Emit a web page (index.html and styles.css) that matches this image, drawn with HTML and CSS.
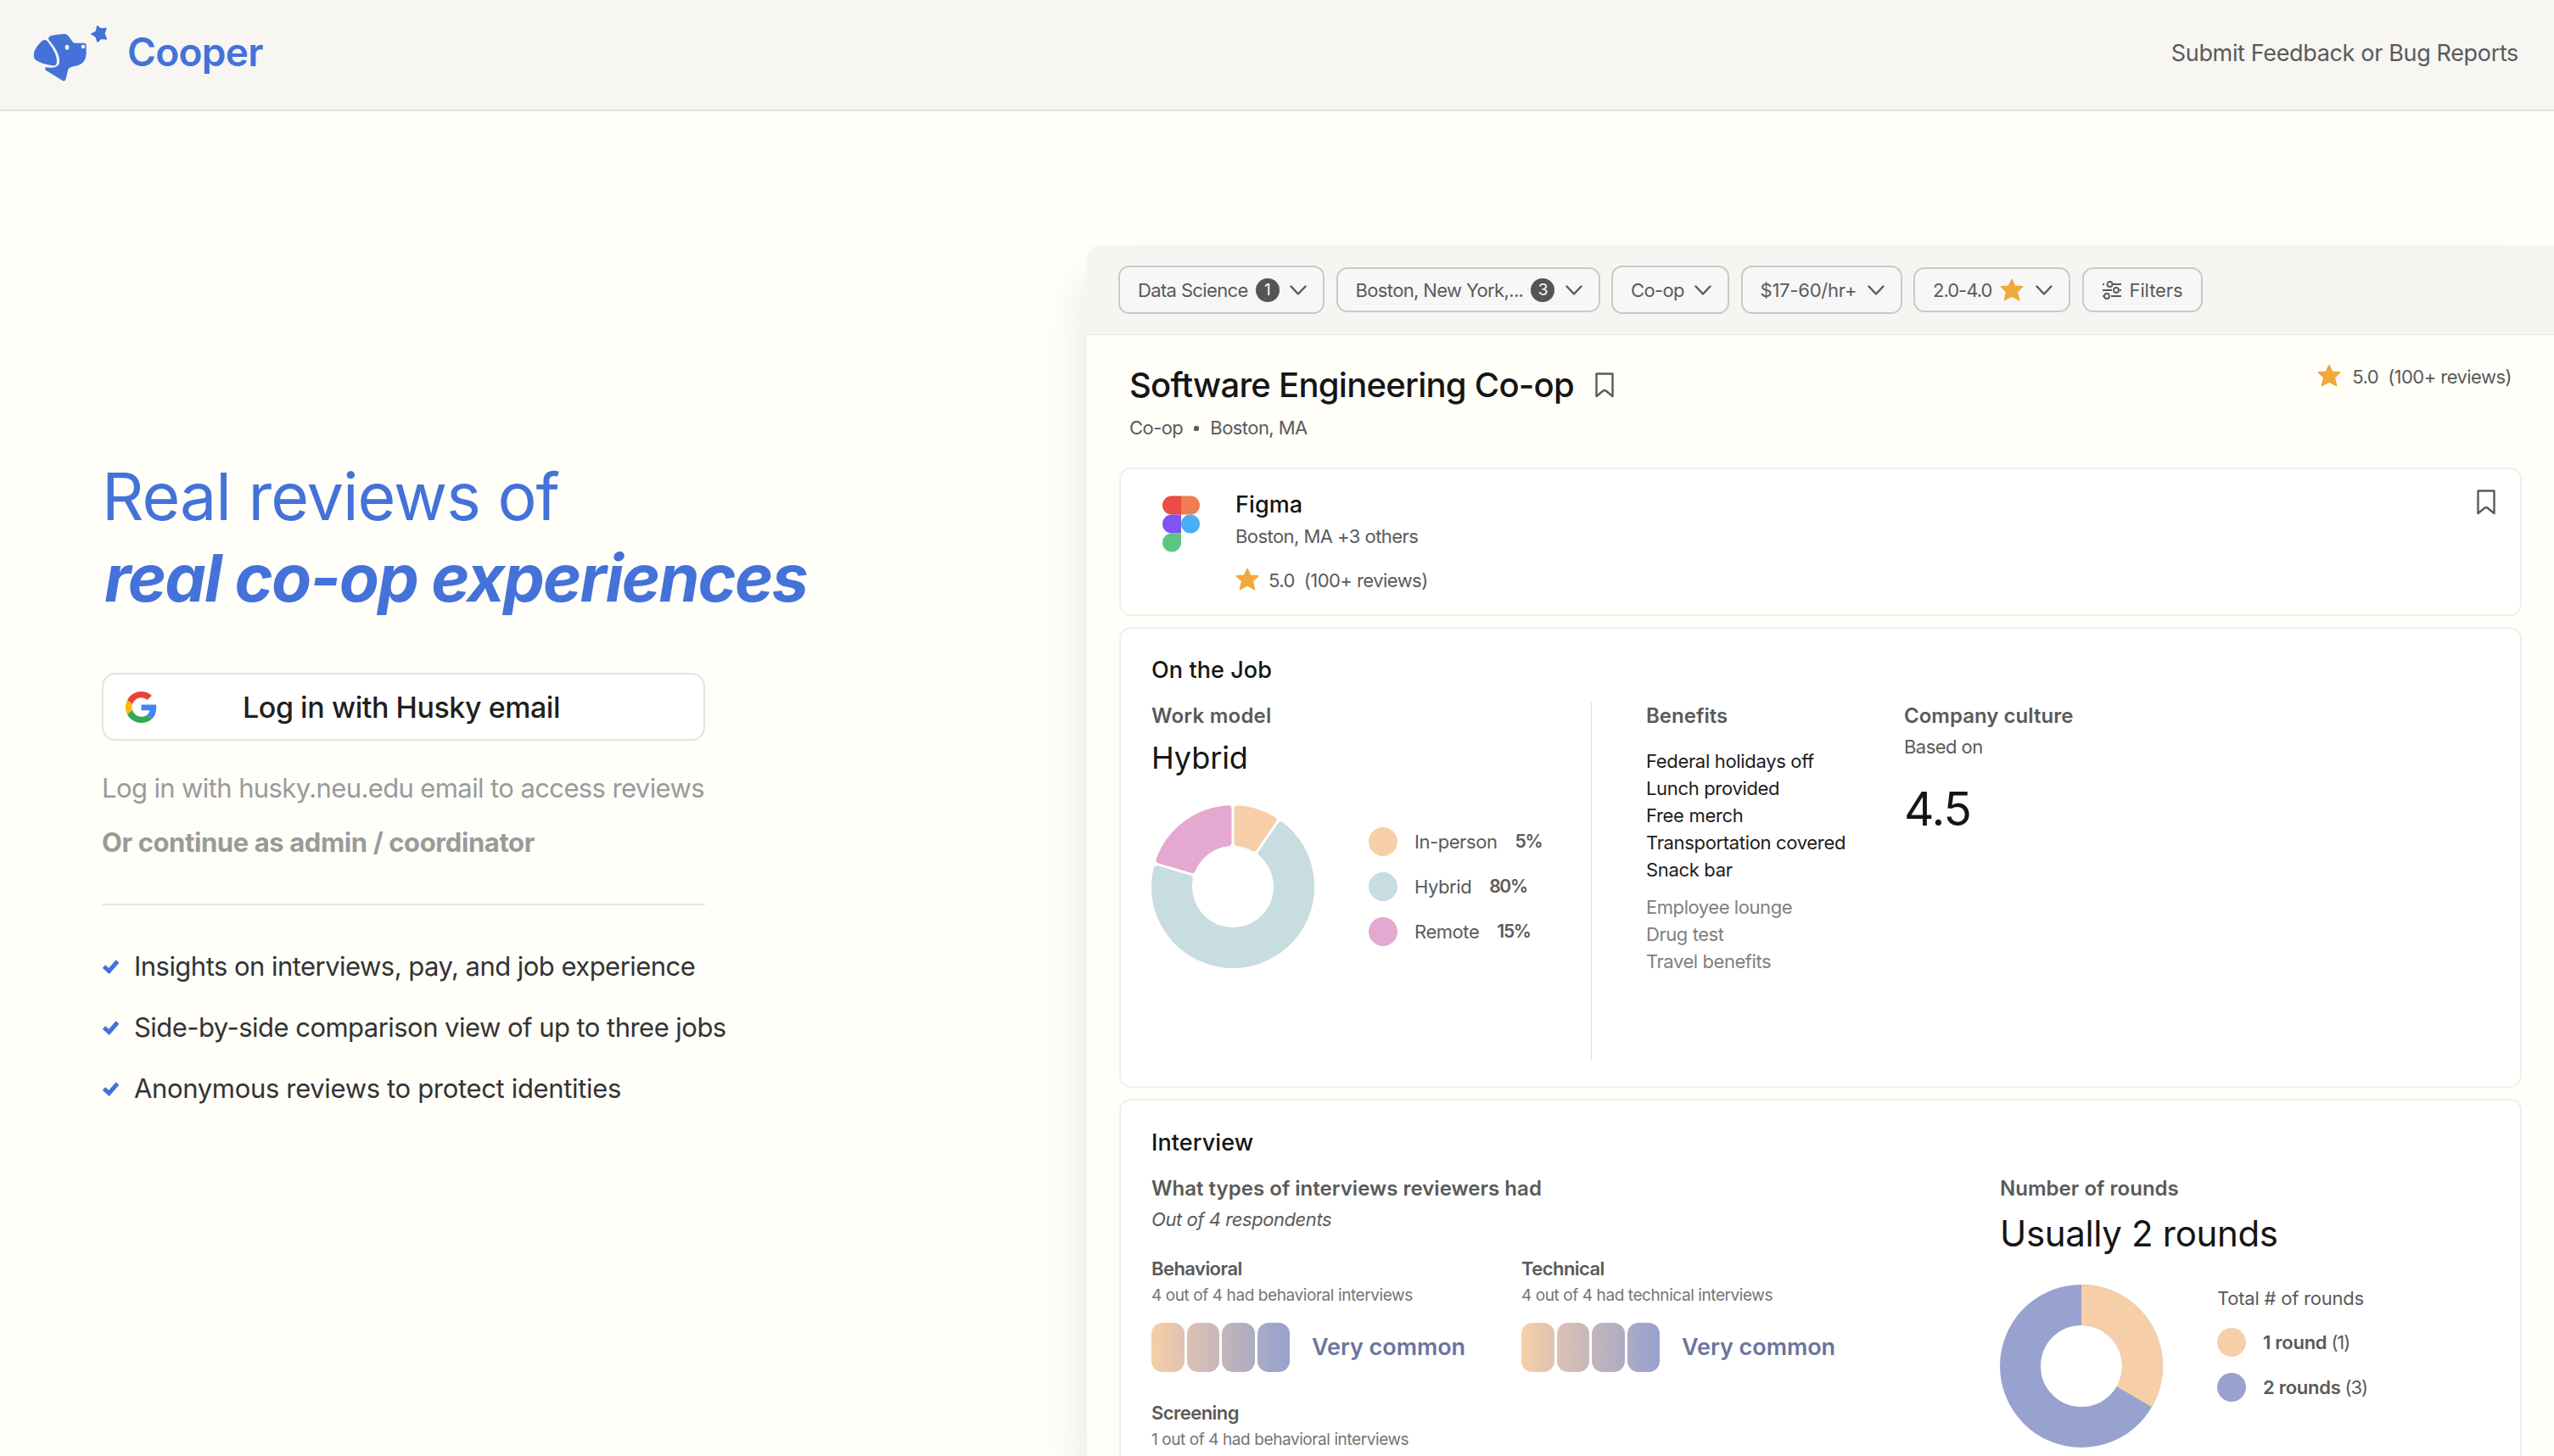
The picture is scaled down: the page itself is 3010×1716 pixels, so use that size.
FILE: index.html
```html
<!DOCTYPE html>
<html lang="en">
<head>
  <meta charset="UTF-8" />
  <meta name="viewport" content="width=device-width, initial-scale=1" />
  <title>Cooper</title>
  <link rel="stylesheet" href="styles.css">
</head>
<body>
  <!-- Shared icons -->
  <svg class="sprite" xmlns="http://www.w3.org/2000/svg">
    <symbol id="chevron" viewBox="0 0 20 12"><path d="M1.5 1.5L10 10.5L18.5 1.5" fill="none" stroke="#5a5a5a" stroke-width="2.4" stroke-linecap="round" stroke-linejoin="round"/></symbol>
    <symbol id="star" viewBox="0 0 28 27"><path d="M14 1.5L17.6 9.3L26.6 9.9L20.2 16L22.6 25.6L14 21L5.4 25.6L7.8 16L1.4 9.9L10.4 9.3Z" fill="#f0a93b" stroke="#f0a93b" stroke-width="1.6" stroke-linejoin="round"/></symbol>
    <symbol id="bookmark" viewBox="0 0 22 30"><path d="M1.5 1.5H20.5V28L12.5 21.5Q11 20.5 9.5 21.5L1.5 28Z" fill="none" stroke="#5a5a5a" stroke-width="2.4" stroke-linejoin="round"/></symbol>
    <symbol id="check" viewBox="0 0 22 18"><path d="M2.5 9L8.5 14.5L18.5 3" fill="none" stroke="#4472d9" stroke-width="5" /></symbol>
  </svg>

  <header class="navbar">
    <div class="brand">
      <svg class="brand-logo" viewBox="118 88 264 204">
        <g fill="#4472d9">
          <path d="M152 144Q162 139 170 148Q205 193 202 222Q200 234 188 233Q150 229 125 212Q118 200 122 183Q132 160 152 144Z"/>
          <path d="M172 137Q173 129 186 126Q210 121 230 121Q238 121 244 130L259 150Q262 153 267 153L298 153Q306 154 306 162L306 190Q304 228 268 234Q245 238 242 246L233 282Q230 290 222 286L165 251Q158 246 162 240Q166 238 175 240Q205 243 211 223Q215 190 174 143Z"/>
          <path d="M345 93L357 103L376 101L370 120L377 139L359 137L346 149L340 131L324 121L341 112Z" stroke="#4472d9" stroke-width="4" stroke-linejoin="round"/>
        </g>
        <ellipse cx="238" cy="168" rx="7" ry="9" fill="#f7f6f3"/>
        <ellipse cx="295" cy="166" rx="7" ry="7" fill="#f7f6f3"/>
      </svg>
      <span class="brand-name">Cooper</span>
    </div>
    <a class="feedback-link">Submit Feedback or Bug Reports</a>
  </header>

  <main class="landing">
    <!-- Login column -->
    <section class="login">
      <h1>Real reviews of<br><em>real co-op experiences</em></h1>
      <button class="login-btn">
        <svg class="google" viewBox="0 0 48 48">
          <path fill="#EA4335" d="M24 9.5c3.54 0 6.71 1.22 9.21 3.6l6.85-6.85C35.9 2.38 30.47 0 24 0 14.62 0 6.51 5.38 2.56 13.22l7.98 6.19C12.43 13.72 17.74 9.5 24 9.5z"/>
          <path fill="#4285F4" d="M46.98 24.55c0-1.57-.15-3.09-.38-4.55H24v9.02h12.94c-.58 2.96-2.26 5.48-4.78 7.18l7.73 6c4.51-4.18 7.09-10.36 7.09-17.65z"/>
          <path fill="#FBBC05" d="M10.53 28.59c-.48-1.45-.76-2.99-.76-4.59s.27-3.14.76-4.59l-7.98-6.19C.92 16.46 0 20.12 0 24c0 3.88.92 7.54 2.56 10.78l7.97-6.19z"/>
          <path fill="#34A853" d="M24 48c6.48 0 11.93-2.13 15.89-5.81l-7.73-6c-2.15 1.45-4.92 2.3-8.16 2.3-6.26 0-11.57-4.22-13.47-9.91l-7.98 6.19C6.51 42.62 14.62 48 24 48z"/>
        </svg>
        <span class="login-label">Log in with Husky email</span>
      </button>
      <p class="hint">Log in with husky.neu.edu email to access reviews</p>
      <p class="hint admin">Or continue as admin / coordinator</p>
      <hr>
      <ul class="perks">
        <li><svg><use href="#check"/></svg>Insights on interviews, pay, and job experience</li>
        <li><svg><use href="#check"/></svg>Side-by-side comparison view of up to three jobs</li>
        <li class="last"><svg><use href="#check"/></svg>Anonymous reviews to protect identities</li>
      </ul>
    </section>

    <!-- Product preview -->
    <section class="preview">
      <div class="filters">
        <div class="chip tall chip-field"><span>Data Science</span><b class="count">1</b><svg class="chevron"><use href="#chevron"/></svg></div>
        <div class="chip chip-city"><span>Boston, New York,...</span><b class="count">3</b><svg class="chevron"><use href="#chevron"/></svg></div>
        <div class="chip tall chip-type"><span>Co-op</span><svg class="chevron"><use href="#chevron"/></svg></div>
        <div class="chip tall chip-pay"><span>$17-60/hr+</span><svg class="chevron"><use href="#chevron"/></svg></div>
        <div class="chip chip-rating"><span>2.0-4.0</span><svg class="star"><use href="#star"/></svg><svg class="chevron"><use href="#chevron"/></svg></div>
        <div class="chip chip-filters">
          <svg class="sliders" viewBox="0 0 24 22" fill="none" stroke="#5a5a5a" stroke-width="1.8">
            <path d="M1 4H3M12.5 4H23M1 11H12M21 11H23M11 18H23M1 18H2"/>
            <circle cx="9.5" cy="4" r="3"/><circle cx="17" cy="11" r="3"/><circle cx="6" cy="18" r="3"/>
          </svg>
          <span>Filters</span>
        </div>
      </div>

      <div class="role">
        <div>
          <h2>Software Engineering Co-op<svg class="bookmark"><use href="#bookmark"/></svg></h2>
          <p class="meta"><span>Co-op</span><i class="dot"></i><span>Boston, MA</span></p>
        </div>
        <p class="rating wide"><svg class="star"><use href="#star"/></svg><span>5.0</span><span>(100+ reviews)</span></p>
      </div>

      <div class="card company">
        <svg class="figma" viewBox="0 0 44 66">
          <path d="M11 0H22V22H11A11 11 0 0 1 11 0Z" fill="#ea4c46"/>
          <path d="M22 0H33A11 11 0 0 1 33 22H22Z" fill="#ef7d4f"/>
          <path d="M11 22H22V44H11A11 11 0 0 1 11 22Z" fill="#8053f2"/>
          <circle cx="33" cy="33" r="11" fill="#4aaef5"/>
          <path d="M11 44H22V55A11 11 0 1 1 11 44Z" fill="#5bc681"/>
        </svg>
        <div class="company-info">
          <h3>Figma</h3>
          <p>Boston, MA +3 others</p>
          <p class="rating"><svg class="star"><use href="#star"/></svg><span>5.0</span><span>(100+ reviews)</span></p>
        </div>
        <svg class="bookmark"><use href="#bookmark"/></svg>
      </div>

      <div class="card job">
        <h3>On the Job</h3>
        <div class="job-grid">
          <div class="work-model">
            <h4>Work model</h4>
            <p class="big">Hybrid</p>
            <div class="chart-row">
              <svg class="donut" viewBox="0 0 192 192" stroke-width="8" stroke-linejoin="round">
                <path fill="#f6cfa9" stroke="#f6cfa9" d="M101.5 4.2A92 92 0 0 1 143.5 17.2L120.8 50.3A52 52 0 0 0 101.5 44.3Z"/>
                <path fill="#c7dde0" stroke="#c7dde0" d="M152.6 23.4A92 92 0 1 1 6.4 75.2L44.9 86.6A52 52 0 1 0 129.8 56.5Z"/>
                <path fill="#e5a8d1" stroke="#e5a8d1" d="M9.5 64.6A92 92 0 0 1 90.5 4.2L90.5 44.3A52 52 0 0 0 48 76Z"/>
              </svg>
              <ul class="legend">
                <li><i class="swatch peach"></i><span>In-person</span><b>5%</b></li>
                <li><i class="swatch teal"></i><span>Hybrid</span><b>80%</b></li>
                <li><i class="swatch pink"></i><span>Remote</span><b>15%</b></li>
              </ul>
            </div>
          </div>
          <div class="benefits">
            <h4>Benefits</h4>
            <ul>
              <li>Federal holidays off</li>
              <li>Lunch provided</li>
              <li>Free merch</li>
              <li>Transportation covered</li>
              <li>Snack bar</li>
            </ul>
            <ul class="muted">
              <li>Employee lounge</li>
              <li>Drug test</li>
              <li>Travel benefits</li>
            </ul>
          </div>
          <div class="culture">
            <h4>Company culture</h4>
            <p>Based on</p>
            <p class="score">4.5</p>
          </div>
        </div>
      </div>

      <div class="card interview">
        <h3>Interview</h3>
        <div class="interview-grid">
          <div class="types">
            <h4>What types of interviews reviewers had</h4>
            <p class="respondents">Out of 4 respondents</p>
            <div class="type-grid">
              <div class="type">
                <h5>Behavioral</h5>
                <p>4 out of 4 had behavioral interviews</p>
                <div class="meter"><i></i><i></i><i></i><i></i><span>Very common</span></div>
              </div>
              <div class="type">
                <h5>Technical</h5>
                <p>4 out of 4 had technical interviews</p>
                <div class="meter"><i></i><i></i><i></i><i></i><span>Very common</span></div>
              </div>
              <div class="type">
                <h5>Screening</h5>
                <p>1 out of 4 had behavioral interviews</p>
              </div>
            </div>
          </div>
          <div class="rounds">
            <h4>Number of rounds</h4>
            <p class="big">Usually 2 rounds</p>
            <div class="chart-row">
              <svg class="donut" viewBox="0 0 192 192" fill="none" stroke-width="48">
                <circle cx="96" cy="96" r="72" stroke="#98a2ce"/>
                <circle cx="96" cy="96" r="72" stroke="#f6cfa9" stroke-dasharray="150.8 301.6" transform="rotate(-90 96 96)"/>
              </svg>
              <div class="legend">
                <p>Total # of rounds</p>
                <div class="legend-item"><i class="swatch peach"></i><span><b>1 round</b> (1)</span></div>
                <div class="legend-item"><i class="swatch blue"></i><span><b>2 rounds</b> (3)</span></div>
              </div>
            </div>
          </div>
        </div>
      </div>
    </section>
  </main>
</body>
</html>
```
FILE: styles.css
```css
* {
  margin: 0;
  padding: 0;
  box-sizing: border-box;
}

body {
  font-family: Inter, "Liberation Sans", sans-serif;
  font-size: 22px;
  line-height: 32px;
  letter-spacing: -0.025em;
  background: #fffef9;
  color: #5a5a5a;
  height: 1716px;
  overflow: hidden;
}

ul {
  list-style: none;
}

i {
  display: block;
}

.sprite {
  position: absolute;
  width: 0;
  height: 0;
}

/* Navbar */
.navbar {
  display: flex;
  justify-content: space-between;
  align-items: center;
  height: 131px;
  padding: 0 42px 4px 39px;
  background: #f7f6f3;
  border-bottom: 2px solid #e4e4e3;
}

.brand {
  display: flex;
  align-items: center;
  gap: 23px;
}

.brand-logo {
  width: 88px;
  height: 68px;
}

.brand-name {
  margin-top: -3px;
  font-size: 46px;
  font-weight: 600;
  letter-spacing: -0.016em;
  color: #4472d9;
}

.feedback-link {
  font-size: 27px;
  letter-spacing: -0.013em;
}

.landing {
  display: flex;
  height: 1585px;
  overflow: hidden;
}

/* Login column */
.login {
  width: 1281px;
  flex-shrink: 0;
  padding: 406px 0 0 120px;
}

.login h1 {
  font-size: 77px;
  line-height: 96px;
  font-weight: 400;
  letter-spacing: -0.013em;
  color: #4472d9;
}

.login h1 em {
  font-weight: 700;
  letter-spacing: -0.0235em;
  margin-left: 3px;
}

.login-btn {
  display: flex;
  align-items: center;
  width: 711px;
  height: 80px;
  margin-top: 64px;
  padding-left: 26px;
  background: #fff;
  border: 2px solid #e3e3e0;
  border-radius: 16px;
  font-family: inherit;
}

.google {
  width: 37px;
  height: 37px;
}

.login-label {
  margin-left: 101px;
  font-size: 34px;
  font-weight: 500;
  letter-spacing: -0.013em;
  color: #1f1f1f;
}

.hint {
  margin-top: 32px;
  font-size: 31px;
  line-height: 48px;
  letter-spacing: -0.0197em;
  color: #9a9a9a;
}

.hint.admin {
  margin-top: 16px;
  font-weight: 700;
  letter-spacing: -0.013em;
}

.login hr {
  width: 711px;
  margin-top: 48px;
  border: none;
  border-top: 2px solid #e2e8f0;
}

.perks {
  display: flex;
  flex-direction: column;
  gap: 24px;
  margin-top: 48px;
  font-size: 31px;
  line-height: 48px;
  letter-spacing: -0.0173em;
  color: #333;
}

.perks li {
  display: flex;
  align-items: center;
  gap: 16px;
}

.perks .last {
  letter-spacing: -0.011em;
}

.perks svg {
  width: 22px;
  height: 18px;
}

/* Product preview */
.preview {
  flex: 1;
  margin-top: 158px;
  background: #fffef9;
  border-top-left-radius: 16px;
  box-shadow: 0 40px 60px rgba(0, 0, 0, 0.1);
}

.filters {
  display: flex;
  align-items: center;
  gap: 13.5px;
  height: 106px;
  padding-left: 37px;
  background: #f6f5f2;
  border-bottom: 1px solid #ebebe9;
  border-top-left-radius: 16px;
}

.chip {
  display: flex;
  align-items: center;
  height: 53px;
  padding: 0 19px 0 21px;
  background: #f7f7f8;
  border: 2px solid #c9c9c9;
  border-radius: 13px;
  letter-spacing: -0.029em;
  white-space: nowrap;
}

.chip.tall {
  height: 57px;
}

.chip-field { width: 243px; }
.chip-city { width: 311px; }
.chip-type { width: 139px; }
.chip-pay { width: 190px; letter-spacing: -0.01em; }
.chip-rating { width: 185px; letter-spacing: -0.045em; }
.chip-filters { width: 142px; letter-spacing: -0.005em; }

.count {
  width: 28px;
  height: 28px;
  margin-left: 9px;
  border-radius: 50%;
  background: #555;
  color: #fff;
  font-size: 19px;
  font-weight: 400;
  line-height: 28px;
  text-align: center;
}

.chevron {
  width: 20px;
  height: 12px;
  margin-left: auto;
}

.star {
  width: 28px;
  height: 27px;
}

.chip .star {
  margin-left: 10px;
}

.sliders {
  width: 24px;
  height: 22px;
  margin-right: 9px;
}

.bookmark {
  width: 22px;
  height: 30px;
}

.role {
  display: flex;
  justify-content: space-between;
  padding: 31px 50px 0 50px;
}

.role h2 {
  display: flex;
  align-items: center;
  gap: 25px;
  font-size: 40px;
  line-height: 56px;
  font-weight: 500;
  letter-spacing: -0.0185em;
  color: #151515;
}

.meta {
  display: flex;
  align-items: center;
  margin-top: 6px;
}

.dot {
  width: 6px;
  height: 6px;
  margin: 2px 13px 0;
  border-radius: 2px;
  background: #5a5a5a;
}

.rating {
  display: flex;
  align-items: center;
  gap: 11px;
  height: 32px;
}

.rating .star {
  margin-bottom: 3px;
}

.rating.wide {
  margin-top: 2px;
}

.rating.wide .star {
  margin-right: 2px;
}

.card {
  margin: 13px 38px 0;
  background: #fff;
  border: 2px solid #efefee;
  border-radius: 14px;
}

.card h3 {
  font-size: 27px;
  line-height: 36px;
  font-weight: 500;
  letter-spacing: 0.003em;
  color: #151515;
}

.card h4 {
  font-size: 24px;
  line-height: 32px;
  font-weight: 600;
  letter-spacing: 0.001em;
}

.company {
  display: flex;
  height: 175px;
  margin-top: 31px;
  padding: 24px 29px 0 49px;
}

.figma {
  width: 44px;
  height: 67px;
  margin: 7px 42px 0 0;
}

.company-info p {
  margin-top: 3px;
}

.company-info .rating {
  margin-top: 20px;
}

.company .bookmark {
  margin-left: auto;
}

.job {
  height: 543px;
  padding: 31px 36px;
}

.job-grid {
  display: flex;
  height: 422px;
  margin-top: 20px;
}

.work-model {
  width: 518px;
}

.work-model h4 {
  letter-spacing: 0.01em;
}

.big {
  margin-top: 11px;
  font-size: 36px;
  line-height: 44px;
  letter-spacing: -0.002em;
  color: #151515;
}

.chart-row {
  display: flex;
  margin-top: 34px;
}

.donut {
  width: 192px;
  height: 192px;
}

.legend {
  display: flex;
  flex-direction: column;
  justify-content: center;
  gap: 19px;
  margin-left: 64px;
}

.work-model .legend {
  letter-spacing: -0.02em;
}

.legend li,
.legend-item {
  display: flex;
  align-items: center;
  height: 34px;
}

.legend li b {
  margin-left: 21px;
  font-size: 21px;
  letter-spacing: -0.06em;
}

.legend b {
  font-weight: 600;
}

.swatch {
  width: 34px;
  height: 34px;
  margin-right: 20px;
  border-radius: 50%;
}

.peach { background: #f6cfa9; }
.teal { background: #c7dde0; }
.pink { background: #e5a8d1; }
.blue { background: #98a2ce; }

.benefits {
  width: 369px;
  padding-left: 64px;
  border-left: 1px solid #dedede;
}

.benefits ul {
  margin-top: 21px;
  letter-spacing: -0.015em;
  color: #1c1c1c;
}

.benefits .muted {
  margin-top: 12px;
  letter-spacing: -0.02em;
  color: #808080;
}

.culture p {
  margin-top: 4px;
}

.culture .score {
  margin-top: 25px;
  font-size: 55px;
  line-height: 64px;
  letter-spacing: -0.02em;
  color: #151515;
}

.interview {
  height: 600px;
  padding: 32px 36px;
}

.interview-grid {
  display: flex;
  margin-top: 20px;
}

.types {
  width: 1000px;
}

.respondents {
  margin-top: 4px;
  font-style: italic;
  letter-spacing: -0.02em;
}

.type-grid {
  display: grid;
  grid-template-columns: 436px 436px;
  row-gap: 34px;
  margin-top: 28px;
}

.type h5 {
  font-size: 22px;
  line-height: 28px;
  font-weight: 600;
}

.type p {
  margin-top: 5px;
  font-size: 19px;
  line-height: 26px;
  letter-spacing: -0.022em;
  color: #757575;
}

.meter {
  display: flex;
  align-items: center;
  gap: 3px;
  height: 58px;
  margin-top: 19px;
}

.meter i {
  width: 38.5px;
  height: 58px;
  border-radius: 13px;
}

.meter i:nth-child(1) { background: linear-gradient(90deg, #f6cfa9, #dfc3b1); }
.meter i:nth-child(2) { background: linear-gradient(90deg, #dcc1b3, #c6b7ba); }
.meter i:nth-child(3) { background: linear-gradient(90deg, #c3b5bb, #adacc3); }
.meter i:nth-child(4) { background: linear-gradient(90deg, #aaabc4, #96a1cf); }

.meter span {
  margin-left: 23px;
  font-size: 27px;
  font-weight: 600;
  letter-spacing: -0.002em;
  color: #6b74a0;
}

.rounds .big {
  font-size: 42px;
  line-height: 52px;
  letter-spacing: -0.008em;
}

.rounds .legend {
  justify-content: flex-start;
  letter-spacing: -0.01em;
}

.legend-item span {
  letter-spacing: -0.05em;
}

.legend-item b {
  letter-spacing: -0.012em;
}
```
